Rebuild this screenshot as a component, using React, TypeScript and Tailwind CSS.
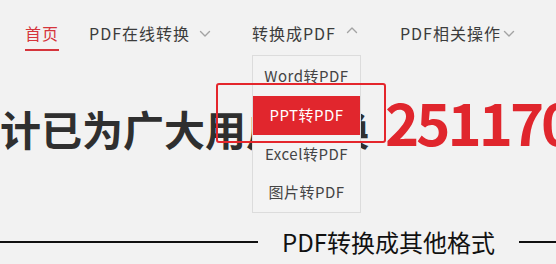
import React from "react";

const font = { fontFamily: '"Noto Sans CJK SC", "Noto Sans", sans-serif' };

function Chevron({ up = false }: { up?: boolean }) {
  return (
    <svg width="12" height="8" viewBox="0 0 12 8" fill="none" className="shrink-0">
      <path
        d={up ? "M1.5 6.5 L6 2 L10.5 6.5" : "M1.5 1.5 L6 6 L10.5 1.5"}
        stroke="#a3a3a3"
        strokeWidth="1.4"
        strokeLinecap="round"
        strokeLinejoin="round"
      />
    </svg>
  );
}

const menu = ["Word转PDF", "PPT转PDF", "Excel转PDF", "图片转PDF"];

export default function App() {
  return (
    <div
      className="relative w-[556px] h-[264px] overflow-hidden bg-[#f2f2f2] text-[#333]"
      style={font}
    >
      {/* Top nav */}
      <nav className="flex items-start pt-[22px] pl-[25px] text-[16px] leading-[22px] tracking-[1px] text-[#3c3c3c] whitespace-nowrap">
        <a className="pb-[5px] border-b-2 border-[#d5353c] text-[#d5353c]">首页</a>
        <div className="ml-[30px] flex items-center">
          <span>PDF在线转换</span>
          <span className="ml-[9px] mt-[2px]">
            <Chevron />
          </span>
        </div>
        <div className="ml-[41px] flex items-center">
          <span>转换成PDF</span>
          <span className="ml-[10px] -mt-[6px]">
            <Chevron up />
          </span>
        </div>
        <div className="ml-[42px] flex items-center">
          <span>PDF相关操作</span>
          <span className="ml-[2px] mt-[2px]">
            <Chevron />
          </span>
        </div>
      </nav>

      {/* Headline */}
      <div className="mt-[40px] ml-[-41px] flex items-baseline whitespace-nowrap font-bold leading-[60px]">
        <span className="text-[41px] text-[#2f2f2f]">累计已为广大用户转换</span>
        <span className="ml-[16px] text-[58px] tracking-[-3px] text-[#e0262d]">2511700</span>
      </div>

      {/* Dropdown */}
      <div className="absolute left-[252px] top-[55px] w-[109px] h-[158px] border border-[#dcdcdc] bg-[#f3f3f3] flex flex-col pt-[1px]">
        {menu.map((m, i) => (
          <div
            key={m}
            className={`flex items-center justify-center h-[39px] text-[15px] tracking-[0.5px] ${
              i === 1 ? "h-[40px] bg-[#e1262d] text-white" : "text-[#444]"
            }`}
          >
            {m}
          </div>
        ))}
      </div>

      {/* Highlight outline */}
      <div className="absolute left-[216px] top-[83px] w-[170px] h-[60px] border-2 border-[#e4262c] rounded-[3px]" />

      {/* Section title */}
      <div className="absolute left-0 right-0 top-[226px] flex items-center">
        <div className="w-[258px] h-[1.5px] bg-[#111]" />
        <div className="ml-[24px] text-[24px] leading-[32px] text-[#111]">PDF转换成其他格式</div>
        <div className="ml-[24px] flex-1 h-[1.5px] bg-[#111]" />
      </div>
    </div>
  );
}
